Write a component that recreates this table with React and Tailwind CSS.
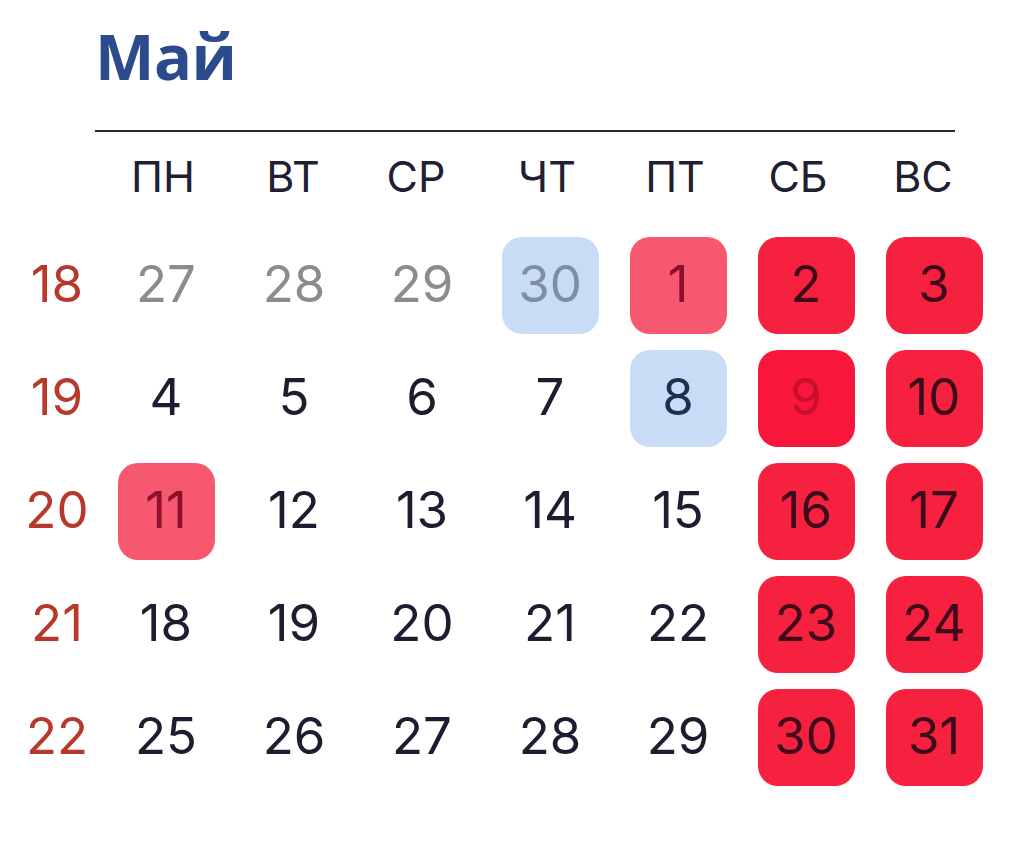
import React from "react";

const headers = [
  ["ПН", "-translate-x-[3px]"],
  ["ВТ", "-translate-x-[1px]"],
  ["СР", "-translate-x-[6px]"],
  ["ЧТ", "-translate-x-[3px]"],
  ["ПТ", "-translate-x-[3px]"],
  ["СБ", "-translate-x-[8px]"],
  ["ВС", "-translate-x-[11px]"],
];

const weeks = [
  { w: "18", days: [["27", "g"], ["28", "g"], ["29", "g"], ["30", "bg"], ["1", "l"], ["2", "r"], ["3", "r"]] },
  { w: "19", days: [["4", "n"], ["5", "n"], ["6", "n"], ["7", "n"], ["8", "b"], ["9", "r9"], ["10", "r"]] },
  { w: "20", days: [["11", "l"], ["12", "n"], ["13", "n"], ["14", "n"], ["15", "n"], ["16", "r"], ["17", "r"]] },
  { w: "21", days: [["18", "n"], ["19", "n"], ["20", "n"], ["21", "n"], ["22", "n"], ["23", "r"], ["24", "r"]] },
  { w: "22", days: [["25", "n"], ["26", "n"], ["27", "n"], ["28", "n"], ["29", "n"], ["30", "r"], ["31", "r"]] },
];

function Day({ v, t }) {
  let box = "";
  let text = "text-[#1c1d30]";
  if (t === "g") text = "text-[#8c8c8c]";
  if (t === "bg") { box = "bg-[#c9dcf5]"; text = "text-[#7e8ea6]"; }
  if (t === "b") { box = "bg-[#c9dcf5]"; text = "text-[#1f2f4f]"; }
  if (t === "l") { box = "bg-[#f6586f]"; text = "text-[#8e0f2d]"; }
  if (t === "r") { box = "bg-[#f5213f]"; text = "text-[#3d0a1c]"; }
  if (t === "r9") { box = "bg-[#f8163a]"; text = "text-[#c70f2e]"; }
  return (
    <div className="flex items-center justify-center h-[113px]">
      <div className={`w-[97px] h-[97px] rounded-[20px] flex items-center justify-center ${box}`}>
        <span className={`text-[51px] leading-none -translate-y-[2px] ${text}`}>{v}</span>
      </div>
    </div>
  );
}

export default function App() {
  return (
    <div className="w-[1025px] h-[842px] bg-white overflow-hidden" style={{ fontFamily: "Inter, 'Noto Sans', sans-serif" }}>
      <div className="pt-[20px] pl-[95px]">
        <h1 className="text-[63px] leading-[72px] font-bold text-[#2b4b8c] tracking-[-0.5px]" style={{ fontFamily: "'Open Sans', 'Noto Sans', sans-serif" }}>
          Май
        </h1>
      </div>
      <div className="ml-[95px] mt-[38px] w-[860px] h-[2px] bg-[#262626]" />
      <div className="grid grid-cols-[102px_repeat(7,128px)]">
        <div className="h-[97px]" />
        {headers.map(([h, off]) => (
          <div key={h} className="h-[97px] flex items-center justify-center text-[43px] text-[#1f2031] leading-none">
            <span className={`-translate-y-[4px] ${off}`}>{h}</span>
          </div>
        ))}
        {weeks.map((wk) => (
          <React.Fragment key={wk.w}>
            <div className="h-[113px] flex items-center justify-center pl-[12px] text-[51px] leading-none text-[#b8382c]">
              <span className="-translate-y-[2px]">{wk.w}</span>
            </div>
            {wk.days.map(([v, t], i) => (
              <Day key={i} v={v} t={t} />
            ))}
          </React.Fragment>
        ))}
      </div>
    </div>
  );
}
